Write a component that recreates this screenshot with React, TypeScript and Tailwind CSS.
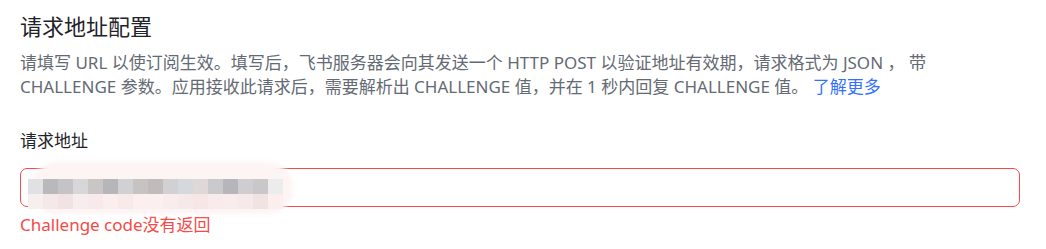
const row1 = [
  "#e1e1e3", "#b9b8bb", "#c5c3c5", "#d7d7da", "#cbc6c6", "#b6b5b8", "#d1d1d4", "#c6c3c2", "#c1bcbb",
  "#d1d1d4", "#d5d8dd", "#ded8d6", "#cacacd", "#b6b5ba", "#cfcdd0", "#cac7cb", "#ececec",
]
const row2 = [
  "#f7eeee", "#f5e8e8", "#f1e3e3", "#f8eded", "#f8eaea", "#fbeeee", "#f9eaea", "#fbefef", "#fbefef",
  "#f9ecec", "#f6e9e9", "#f7e6e6", "#f9ebeb", "#f9ecec", "#f7e9e9", "#f2e3e3", "#faeeee",
]

function Mosaic() {
  return (
    <div className="pointer-events-none absolute left-0 top-0">
      <div className="absolute left-[10px] top-[-7px] h-[52px] w-[262px] rounded-[26px] bg-[#fdf4f4] blur-[2px]" />
      <div className="absolute left-[7px] top-[10px] flex flex-col">
        <div className="flex">
          {row1.map((c, i) => (
            <div key={i} className="h-[15px] w-[15px]" style={{ backgroundColor: c }} />
          ))}
        </div>
        <div className="flex">
          {row2.map((c, i) => (
            <div key={i} className="h-[15px] w-[15px]" style={{ backgroundColor: c }} />
          ))}
        </div>
      </div>
    </div>
  )
}

export default function App() {
  return (
    <div
      className="h-[249px] w-[1046px] bg-white px-5 pt-[10px] text-[#1f2329]"
      style={{ fontFamily: '"Noto Sans", "Noto Sans CJK SC", sans-serif' }}
    >
      <h2 className="text-[22px] leading-[32px] font-normal">请求地址配置</h2>
      <p className="mt-[9px] text-[17px] leading-[24px] text-[#646a73]">
        请填写 URL 以使订阅生效。填写后，飞书服务器会向其发送一个 HTTP POST 以验证地址有效期，请求格式为 JSON ， 带
        <br />
        CHALLENGE 参数。应用接收此请求后，需要解析出 CHALLENGE 值，并在 1 秒内回复 CHALLENGE 值。{" "}
        <a className="text-[#3370ff]">了解更多</a>
      </p>
      <div className="mt-[30px] text-[17px] leading-[24px]">请求地址</div>
      <div className="relative mt-[15px] h-[39px] w-[1000px] rounded-[7px] border border-[#f54a45]">
        <Mosaic />
      </div>
      <div className="mt-[6px] text-[17px] leading-[24px] text-[#f54a45]">Challenge code没有返回</div>
    </div>
  )
}
